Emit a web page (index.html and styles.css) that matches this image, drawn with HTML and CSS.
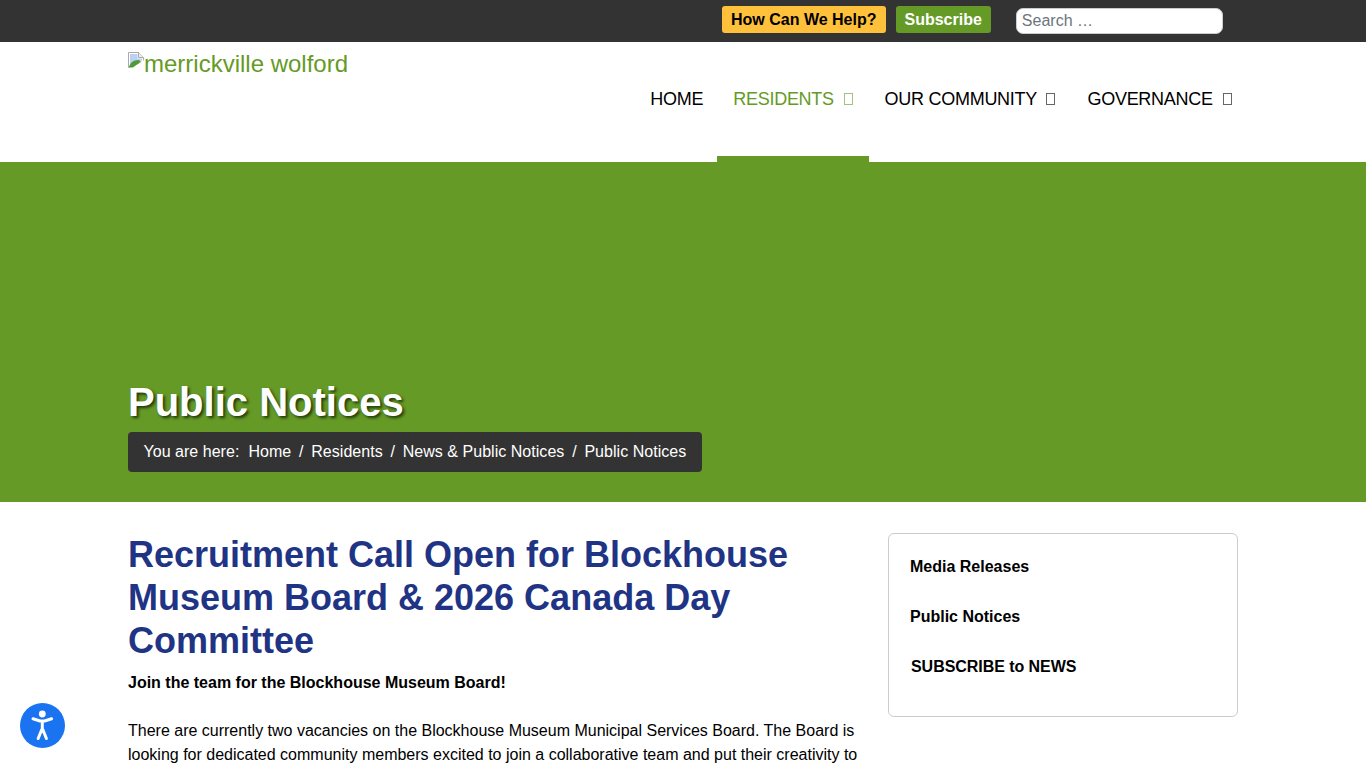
FILE: index.html
```html
<!DOCTYPE html>
<html lang="en">
<head>
    <meta charset="UTF-8">
    <meta name="viewport" content="width=device-width, initial-scale=1.0">
    <title>Public Notices</title>
    <link rel="stylesheet" href="styles.css">
</head>
<body>
    <div class="topbar">
        <div class="container topbar-inner">
            <a class="btn btn-help" href="#">How Can We Help?</a>
            <a class="btn btn-subscribe" href="#">Subscribe</a>
            <input class="search" type="text" placeholder="Search …">
        </div>
    </div>

    <header class="site-header">
        <div class="container header-inner">
            <a class="logo" href="#">
                <svg class="broken-img" width="16" height="16" viewBox="0 0 16 16">
                    <path d="M.5.5h10l5 5v4L.5 15.5z" fill="#fff" stroke="#a9a9a9"/>
                    <path d="M10.5.5v5h5" fill="#eee" stroke="#a9a9a9"/>
                    <path d="M2 2h7.5v4.5H14v2L2 12z" fill="#bcd0f4"/>
                    <path d="M1 15.5c.5-4 4-7.500 9.500-7.500L13 9.500 5 15.500z" fill="#4f9a35"/>
                    <path d="M5 16l11-8v8z" fill="#fff"/>
                </svg>merrickville wolford</a>
            <nav class="main-nav">
                <a class="nav-item nav-home" href="#">HOME</a>
                <a class="nav-item active" href="#">RESIDENTS <span class="tofu"></span></a>
                <a class="nav-item" href="#">OUR COMMUNITY <span class="tofu"></span></a>
                <a class="nav-item" href="#">GOVERNANCE <span class="tofu"></span></a>
            </nav>
        </div>
    </header>

    <section class="hero">
        <div class="container">
            <h1>Public Notices</h1>
            <div class="breadcrumb">
                <span class="crumb-label">You are here:</span>
                <a href="#">Home</a><span class="sep">/</span>
                <a href="#">Residents</a><span class="sep">/</span>
                <a href="#">News &amp; Public Notices</a><span class="sep">/</span>
                <span>Public Notices</span>
            </div>
        </div>
    </section>

    <div class="container content">
        <main class="article">
            <h2>Recruitment Call Open for Blockhouse Museum Board &amp; 2026 Canada Day Committee</h2>
            <p><strong>Join the team for the Blockhouse Museum Board!</strong></p>
            <p>There are currently two vacancies on the Blockhouse Museum Municipal Services Board. The Board is looking for dedicated community members excited to join a collaborative team and put their creativity to</p>
        </main>
        <aside class="side-menu">
            <a href="#">Media Releases</a>
            <a href="#">Public Notices</a>
            <a class="side-subscribe" href="#">SUBSCRIBE to NEWS</a>
        </aside>
    </div>

    <button class="a11y-btn" aria-label="Accessibility">
        <svg width="45" height="45" viewBox="0 0 45 45">
            <circle cx="22.300" cy="11" r="3.400" fill="#fff"/>
            <path d="M13 15.800l7 2.200h4.600l7-2.200M22.300 18v8M22 26l-3.800 9.500M22.600 26l3.800 9.500" fill="none" stroke="#fff" stroke-width="3" stroke-linecap="round" stroke-linejoin="round"/>
        </svg>
    </button>
</body>
</html>
```

FILE: styles.css
```css
html, body {
    height: 768px;
    overflow: hidden;
}
body {
    margin: 0;
    font-family: "Liberation Sans", Arial, sans-serif;
    font-size: 16px;
    line-height: 24px;
    color: #000;
    background: #fff;
}
a {
    text-decoration: none;
    color: inherit;
}
.container {
    width: 1110px;
    margin: 0 auto;
}

/* top bar */
.topbar {
    background: #333;
    height: 42px;
}
.topbar-inner {
    display: flex;
    align-items: flex-start;
    padding-top: 6px;
    padding-left: 594px;
    box-sizing: border-box;
}
.btn {
    height: 27px;
    line-height: 27px;
    padding: 0 9px;
    border-radius: 3px;
    font-weight: bold;
}
.btn-help {
    background: #ffc13b;
    color: #000;
    margin-right: 10px;
}
.btn-subscribe {
    background: #659a26;
    color: #fff;
    margin-right: 25px;
}
.search {
    width: 207px;
    height: 26px;
    box-sizing: border-box;
    margin-top: 2px;
    padding: 0 5px;
    border: 1px solid #ccc;
    border-radius: 7px;
    font-family: inherit;
    font-size: 16px;
}
.search::placeholder {
    color: #6c757d;
}

/* header */
.site-header {
    height: 120px;
}
.header-inner {
    display: flex;
    justify-content: space-between;
    position: relative;
}
.logo {
    margin-top: 8px;
    font-size: 24px;
    line-height: 28px;
    color: #659a26;
    white-space: nowrap;
}
.broken-img {
    vertical-align: 4px;
}
.main-nav {
    display: flex;
    height: 120px;
    margin-right: -9.5px;
}
.nav-item {
    position: relative;
    padding: 45px 16px 0;
    font-size: 18px;
    line-height: 24px;
    letter-spacing: -0.27px;
    white-space: nowrap;
}
.nav-home {
    margin-right: -2px;
}
.nav-item.active {
    color: #659a26;
}
.nav-item.active::after {
    content: "";
    position: absolute;
    left: 0;
    right: 0;
    bottom: 0;
    height: 6px;
    background: #659a26;
}
.tofu {
    display: inline-block;
    width: 7px;
    height: 10px;
    margin-left: 5px;
    border: 1px solid currentColor;
    opacity: 0.6;
}

/* hero */
.hero {
    height: 340px;
    background: #659a26;
    box-sizing: border-box;
    padding-top: 216px;
}
.hero h1 {
    margin: 0 0 6px;
    font-size: 40px;
    line-height: 48px;
    font-weight: bold;
    color: #fff;
    text-shadow: 2px 2px 3px #22390c;
}
.breadcrumb {
    display: inline-flex;
    height: 40px;
    align-items: center;
    padding: 0 16px 0 15.5px;
    border-radius: 4px;
    background: #333;
    color: #fff;
    letter-spacing: 0.03px;
    white-space: nowrap;
}
.crumb-label {
    margin-right: 9px;
}
.sep {
    margin: 0 7.8px;
}

/* content */
.content {
    display: flex;
    justify-content: space-between;
    align-items: flex-start;
}
.article {
    width: 730px;
}
.article h2 {
    margin: 31px 0 9px;
    font-size: 36px;
    line-height: 43px;
    color: #1f3484;
}
.article p {
    margin: 0 0 24px;
}
.side-menu {
    width: 350px;
    height: 184px;
    box-sizing: border-box;
    margin-top: 31px;
    padding: 8px 21px;
    border: 1px solid #ccc;
    border-radius: 6px;
    font-weight: bold;
}
.side-menu a {
    display: block;
    height: 50px;
    line-height: 50px;
}
.side-menu .side-subscribe {
    padding-left: 1px;
    letter-spacing: -0.05px;
}

/* accessibility widget */
.a11y-btn {
    position: fixed;
    left: 20px;
    bottom: 20px;
    width: 45px;
    height: 45px;
    padding: 0;
    border: none;
    border-radius: 50%;
    background: #1a73f0;
    display: flex;
    align-items: center;
    justify-content: center;
}
```
